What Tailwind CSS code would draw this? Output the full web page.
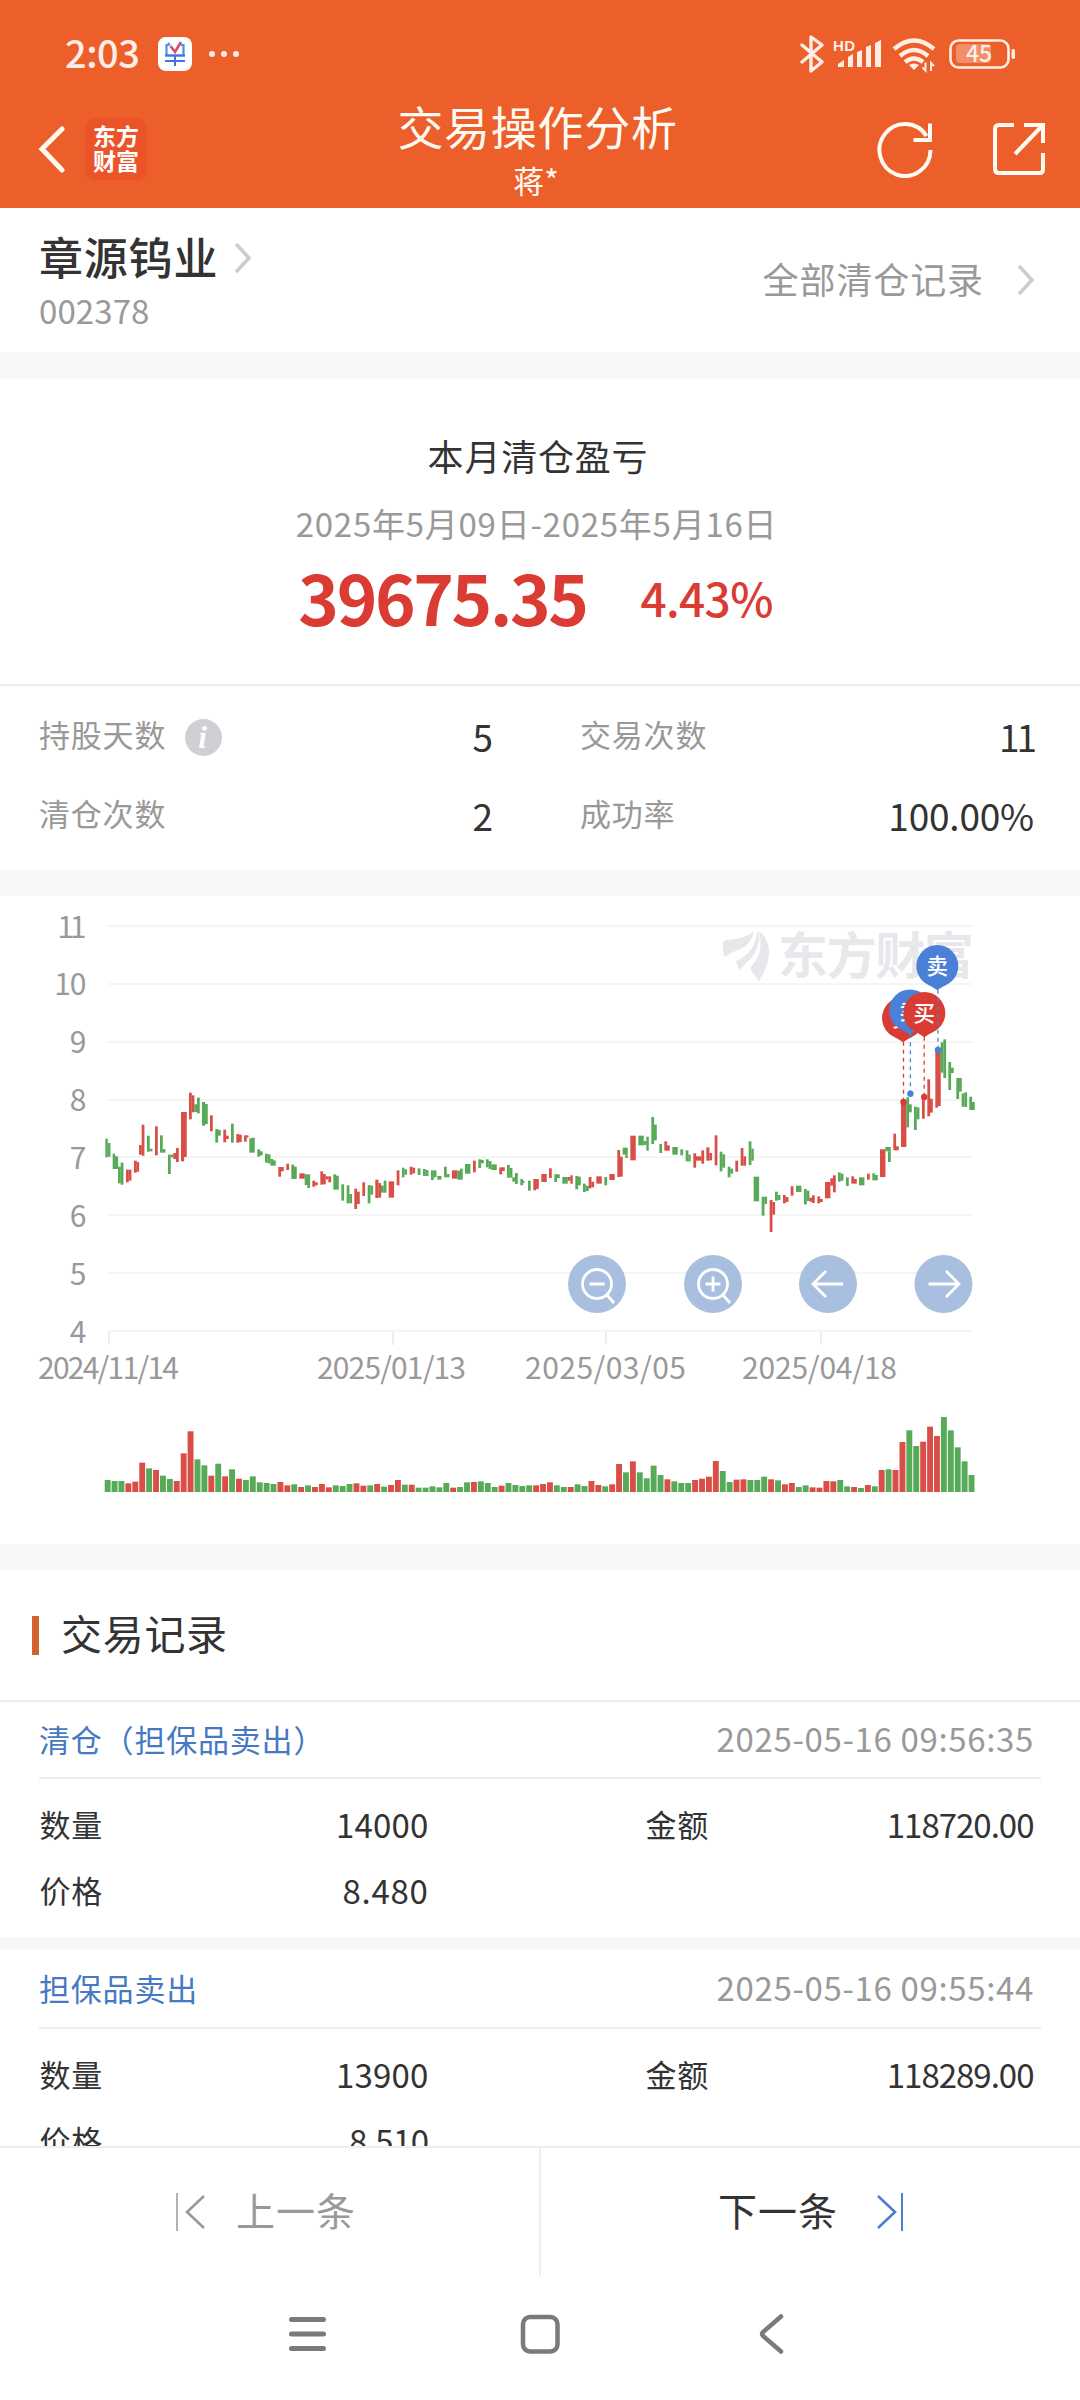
<!DOCTYPE html>
<html lang="zh-CN">
<head>
<meta charset="utf-8">
<title>交易操作分析</title>
<script src="https://cdn.jsdelivr.net/npm/@tailwindcss/browser@4"></script>
</head>
<body class="bg-white">
<div class="flex h-[2400px] w-[1080px] flex-col overflow-hidden bg-white font-['Noto_Sans_CJK_SC',sans-serif] leading-none text-[#333]">

  <!-- Header -->
  <header class="flex h-[208px] shrink-0 flex-col bg-[#ec5f2b] text-white">
    <div class="flex h-[104px] shrink-0 items-center justify-between pr-[64px] pl-[65px] text-[#ffeee6]">
      <div class="flex items-center">
        <span class="w-[93px] text-[38px] font-medium tracking-[-0.5px]">2:03</span>
        <svg class="mt-[4px]" width="34" height="34" viewBox="0 0 34 34" fill="none">
          <rect width="34" height="34" rx="8" fill="#fff"/>
          <path d="M12 8l-2-2M11 8H8.500v10.500h17V8H23" stroke="#4a94e0" stroke-width="2.2"/>
          <path d="M7 24h20M7 18.500h20M17 19v10" stroke="#3f74de" stroke-width="2"/>
          <path d="M12.500 9l4.500 6 6-10" stroke="#d84a70" stroke-width="2.6"/>
        </svg>
        <svg class="mt-[4px] ml-[17px]" width="30" height="6" viewBox="0 0 30 6" fill="currentColor"><circle cx="3" cy="3" r="3"/><circle cx="15" cy="3" r="3"/><circle cx="27" cy="3" r="3"/></svg>
      </div>
      <svg class="mt-[4px]" width="216" height="38" viewBox="800 35 216 38" fill="none" stroke="currentColor">
        <path d="M802 45l20 17-11 9V37l11 8-20 17" stroke-width="3.4" stroke-linejoin="round" stroke-linecap="round"/>
        <text x="833" y="50.500" font-size="15" font-weight="bold" fill="currentColor" stroke="none" font-family="Liberation Sans" textLength="22">HD</text>
        <g fill="currentColor" stroke="none">
          <path d="M838 67v-3l6-4v7zM848 67V57l5-3v13zM857 67V52l5-2v17zM866 67V47l5-2v22zM875 67V43l6-3v27z"/>
          <path d="M914 70l-5-5q5-3 10 0z"/>
        </g>
        <path d="M925.500 62.500v8l-3-3M931 71v-8l3 3" stroke-width="2"/>
        <path d="M894 49q20-17 40 0M900 56q14-12 28 0M905 62q9-7 18 0" stroke-width="4.4"/>
        <rect x="950.5" y="40.500" width="58" height="27" rx="8" stroke-width="2.6"/>
        <rect x="956" y="44" width="35" height="19" rx="4" fill="#f08f68" stroke="none"/>
        <rect x="1011.500" y="49" width="3.500" height="10" rx="1.700" fill="currentColor" stroke="none"/>
        <text x="966" y="62" font-size="23" font-weight="500" fill="currentColor" stroke="none" font-family="Noto Sans CJK SC" textLength="26">45</text>
      </svg>
    </div>
    <div class="flex h-[104px] items-start justify-between pr-[34px] pl-[38px]">
      <div class="flex w-[170px] items-center pt-[14px]">
        <svg width="28" height="48" viewBox="0 0 28 48" fill="none" stroke="#fff8ef" stroke-width="5" stroke-linecap="round"><path d="M24 4L4 24l20 21"/></svg>
        <div class="ml-[19px] flex h-[62px] w-[62px] flex-col items-center justify-center rounded-[11px] bg-[#eb5428] pb-[2px] text-[23px] leading-[25.500px] font-bold">
          <span>东方</span><span>财富</span>
        </div>
      </div>
      <div class="mt-[-2px] mr-[9px] flex flex-col items-center text-[#fffaf2]">
        <h1 class="text-[46px] leading-[46px] tracking-[0.700px]">交易操作分析</h1>
        <p class="mt-[16px] mr-[3px] text-[31px] leading-[31px]">蒋*</p>
      </div>
      <div class="flex w-[170px] justify-between pt-[16px]">
        <svg width="58" height="58" viewBox="876 120 58 58" fill="none" stroke="#fffaf2" stroke-width="4"><path d="M930.500 150a25.500 26 0 1 1-4-14M930 123.500v16.500h-16.500"/></svg>
        <svg width="56" height="56" viewBox="990 121 56 56" fill="none" stroke="#fffaf2" stroke-width="4"><path d="M1014 126h-15q-4 0-4 4v40q0 4 4 4h41q3 0 3-4v-16M1024 126h19v18M1042 127l-27 28"/></svg>
      </div>
    </div>
  </header>

  <!-- Stock -->
  <section class="flex h-[144px] shrink-0 justify-between pr-[45px] pl-[39px]">
    <div class="pt-[26px]">
      <div class="flex items-center">
        <h2 class="text-[44px] leading-[44px] font-medium tracking-[0.800px]">章源钨业</h2>
        <svg class="mt-[3px] ml-[16px]" width="18" height="32" viewBox="0 0 18 32" fill="none" stroke="#ccc" stroke-width="3.500"><path d="M2 2l13 14L2 30"/></svg>
      </div>
      <p class="mt-[16px] text-[33px] leading-[33px] tracking-[0.100px] text-[#999]">002378</p>
    </div>
    <div class="flex h-[140px] items-center text-[36px] tracking-[0.900px] text-[#999]">
      <span>全部清仓记录</span>
      <svg class="mt-[4px] ml-[33px]" width="18" height="32" viewBox="0 0 18 32" fill="none" stroke="#ccc" stroke-width="3.500"><path d="M2 2l13 14L2 30"/></svg>
    </div>
  </section>
  <div class="h-[27px] shrink-0 bg-[#f8f8f8]"></div>

  <!-- Profit -->
  <section class="flex h-[307px] shrink-0 flex-col items-center border-b-2 border-[#eee] pt-[58px]">
    <h3 class="ml-[-4px] text-[36px] leading-[36px] tracking-[0.800px]">本月清仓盈亏</h3>
    <p class="mt-[34px] ml-[-7px] text-[33px] leading-[33px] tracking-[0.750px] text-[#999]">2025年5月09日-2025年5月16日</p>
    <div class="mt-[20px] ml-[-9px] flex items-center gap-[54px] font-bold text-[#da3b32]">
      <span class="text-[69px] leading-[70px] tracking-[-2.400px]">39675.35</span>
      <span class="pt-[2px] text-[46px] leading-[70px] font-medium tracking-[-0.700px]">4.43%</span>
    </div>
  </section>

  <!-- Statistics -->
  <section class="grid h-[184px] shrink-0 grid-cols-2 content-start gap-x-[87px] pt-[10px] pr-[46px] pl-[39px] text-[31px] tracking-[0.800px] text-[#999]">
    <div class="flex h-[78px] items-center justify-between">
      <span class="flex items-center pb-[4px]">持股天数
        <svg class="mt-[8px] ml-[19px]" width="37" height="37" viewBox="0 0 37 37"><circle cx="18.500" cy="18.500" r="18.500" fill="#cfd0d6"/><text x="18" y="28.500" text-anchor="middle" fill="#fff" font-family="Liberation Serif" font-style="italic" font-weight="bold" font-size="31">i</text></svg>
      </span>
      <span class="pt-[3px] text-[37px] tracking-normal text-[#333]">5</span>
    </div>
    <div class="flex h-[78px] items-center justify-between"><span class="pb-[4px]">交易次数</span><span class="pt-[3px] text-[37px] tracking-[-3px] text-[#333]">11</span></div>
    <div class="flex h-[78px] items-center justify-between"><span class="pb-[2px]">清仓次数</span><span class="pt-[4px] text-[37px] tracking-normal text-[#333]">2</span></div>
    <div class="flex h-[78px] items-center justify-between"><span class="pb-[2px]">成功率</span><span class="pt-[4px] text-[37px] tracking-[-0.200px] text-[#333]">100.00%</span></div>
  </section>
  <div class="h-[26px] shrink-0 bg-[#f8f8f8]"></div>

  <!-- Chart -->
  <section class="h-[648px] shrink-0">
    <svg id="chart" width="1080" height="648" viewBox="0 896 1080 648" font-family="Noto Sans CJK SC, sans-serif">
      <g id="grid" stroke="#f5f5f5" stroke-width="2"></g>
      <g id="ticks" stroke="#eee" stroke-width="2"></g>
      <g id="labels" fill="#999" font-size="30"></g>
      <g fill="#e7e7ec">
        <path d="M723 944q0-4 4-4 18-1 27-9-3 14-14 18-8 3-16 8-1-6-1-13z"/>
        <path d="M736 961q20-9 21-30 3 4 2 10-3 14-13 22-4 4-6 8z"/>
        <path d="M759 931q8 6 10 18 1 15-10 32l-8-11q-1-4 3-7 10-12 5-32z"/>
        <text x="778" y="974" font-size="50" font-weight="bold" textLength="196">东方财富</text>
      </g>
      <g id="candles"></g>
      <g id="volume"></g>
      <g id="pins"></g>
      <g fill="#a9bfe0">
        <circle cx="597" cy="1284" r="29"/><circle cx="713" cy="1284" r="29"/><circle cx="828" cy="1284" r="29"/><circle cx="943.500" cy="1284" r="29"/>
      </g>
      <g fill="none" stroke="#fff" stroke-width="2.800">
        <circle cx="597" cy="1284" r="14.500"/><path d="M589.500 1284h15M607 1295l7 8"/>
        <circle cx="713" cy="1284" r="14.500"/><path d="M705.500 1284h15M713 1276.500v15M723 1295l7 8"/>
        <path d="M843 1284h-29M826 1271l-13 13 13 13"/>
        <path d="M928.500 1284h30M946 1271l13 13-13 13"/>
      </g>
    </svg>
  </section>
  <div class="h-[26px] shrink-0 bg-[#f8f8f8]"></div>

  <!-- Trade records -->
  <section class="h-[576px] shrink-0 overflow-hidden">
    <div class="flex h-[132px] items-center border-b-2 border-[#eee] pl-[32px]">
      <i class="h-[39px] w-[7px] bg-[#d2622f]"></i>
      <h3 class="ml-[22px] pb-[5px] text-[41px] tracking-[0.700px]">交易记录</h3>
    </div>
    <article class="h-[235px] pr-[39px] pl-[39px]">
      <div class="flex h-[77px] items-center justify-between border-b-2 border-[#eee] pr-[7px] pb-[3px]">
        <span class="text-[31px] tracking-[0.800px] text-[#4678c4]">清仓（担保品卖出）</span>
        <time class="text-[33px] tracking-[0.650px] text-[#999]">2025-05-16 09:56:35</time>
      </div>
      <div class="grid h-[158px] grid-cols-[389px_217px_388px] content-start pt-[12px] pl-[0.500px] text-[33px] leading-[66px]">
        <div class="flex justify-between"><span class="text-[31px] tracking-[0.800px]">数量</span><span class="tracking-[0.200px]">14000</span></div>
        <span></span>
        <div class="flex justify-between"><span class="text-[31px] tracking-[0.800px]">金额</span><span class="tracking-[-1px]">118720.00</span></div>
        <div class="flex justify-between"><span class="text-[31px] tracking-[0.800px]">价格</span><span class="tracking-[0.700px]">8.480</span></div>
      </div>
    </article>
    <div class="h-[13px] bg-[#f8f8f8]"></div>
    <article class="h-[235px] pr-[39px] pl-[39px]">
      <div class="flex h-[79px] items-center justify-between border-b-2 border-[#eee] pr-[7px] pb-[3px]">
        <span class="text-[31px] tracking-[0.800px] text-[#4678c4]">担保品卖出</span>
        <time class="text-[33px] tracking-[0.650px] text-[#999]">2025-05-16 09:55:44</time>
      </div>
      <div class="grid grid-cols-[389px_217px_388px] content-start pt-[12px] pl-[0.500px] text-[33px] leading-[66px]">
        <div class="flex justify-between"><span class="text-[31px] tracking-[0.800px]">数量</span><span class="tracking-[0.200px]">13900</span></div>
        <span></span>
        <div class="flex justify-between"><span class="text-[31px] tracking-[0.800px]">金额</span><span class="tracking-[-1px]">118289.00</span></div>
        <div class="flex justify-between"><span class="text-[31px] tracking-[0.800px]">价格</span><span class="tracking-[-0.600px]">8.510</span></div>
      </div>
    </article>
  </section>

  <!-- Pager -->
  <nav class="flex h-[130px] shrink-0 border-t-2 border-[#eee] text-[39px] tracking-[1px]">
    <div class="flex w-[541px] items-center border-r-2 border-[#eee] pl-[176px] text-[#999]">
      <svg width="32" height="38" viewBox="0 0 32 38" fill="none" stroke="currentColor"><path d="M1 0v38" stroke-width="1.500"/><path d="M28 3L11 19l17 16" stroke-width="2.600"/></svg>
      <span class="ml-[28px] pb-[6px]">上一条</span>
    </div>
    <div class="flex items-center pl-[177px]">
      <span class="pb-[6px]">下一条</span>
      <svg class="ml-[37px]" width="32" height="38" viewBox="0 0 32 38" fill="none" stroke="#4a80d0"><path d="M27 0v38" stroke-width="2"/><path d="M3 3l17 16L3 35" stroke-width="2.600"/></svg>
    </div>
  </nav>

  <!-- System navigation -->
  <nav class="flex h-[124px] shrink-0 items-start pt-[34px] pl-[289px]">
    <svg width="37" height="46" viewBox="0 0 37 46" fill="none" stroke="#7a7a7a" stroke-width="5" stroke-linecap="round"><path d="M2.500 9.500h32M2.500 24h32M2.500 38.500h32"/></svg>
    <svg class="ml-[194px]" width="40" height="46" viewBox="0 0 40 46" fill="none" stroke="#7a7a7a" stroke-width="4.500"><rect x="3" y="7" width="34.500" height="34.500" rx="7"/></svg>
    <svg class="ml-[198px]" width="28" height="46" viewBox="0 0 28 46" fill="none" stroke="#7a7a7a" stroke-width="4.500" stroke-linecap="round" stroke-linejoin="round"><path d="M23 6.500L5 22q-2 2 0 4l18 15.500"/></svg>
  </nav>
</div>

<script>
const NS = 'http://www.w3.org/2000/svg';
const RED = '#d94f48', GREEN = '#57aa57';
function add(parent, tag, attrs, text) {
  const el = document.createElementNS(NS, tag);
  for (const k in attrs) el.setAttribute(k, attrs[k]);
  if (text) el.textContent = text;
  document.getElementById(parent).appendChild(el);
}
for (let i = 0; i < 8; i++) {
  const y = 926 + i * 57.86;
  add('grid', 'line', {x1: 108, x2: 972, y1: Math.round(y), y2: Math.round(y)});
  const narrow = i === 0 ? -4 : i === 1 ? -1 : 0;
  add('labels', 'text', {x: 86.5 + narrow, y: y + 11.5, 'text-anchor': 'end', 'letter-spacing': narrow}, String(11 - i));
}
[[109, 39, 139, '2024/11/14'], [393, 318, 147, '2025/01/13'], [606, 526, 159, '2025/03/05'], [821, 743, 153, '2025/04/18']].forEach(([t, x, w, s]) => {
  add('ticks', 'line', {x1: t, x2: t, y1: 1332, y2: 1345});
  add('labels', 'text', {x: x - 1, y: 1379, textLength: w + 2}, s);
});

// Candle pieces: colour, x0-x1, y0-y1 in thirds of a pixel from each group's origin
const groups = [
[80, 1060, `g 76-83 236-292;g 83-91 249-290;g 98-105 281-327;g 105-114 289-327;g 114-122 320-370;g 122-130 308-374;r 138-146 329-367;r 146-154 329-362;r 162-170 302-338;r 170-177 306-335;r 177-185 255-284;r 185-193 194-287;g 201-209 227-275;g 209-217 266-274;r 225-233 199-286;g 240-248 226-278;g 248-256 267-278;g 264-272 284-342;g 272-280 284-292;r 280-288 279-297;r 288-296 264-306;r 303-312 156-304;r 312-320 156-291;r 327-335 98-178;r 335-343 106-157;g 343-351 133-156;g 351-359 113-160;g 366-375 126-197;g 375-383 132-192;r 390-398 166-214;g 406-414 207-248;g 414-422 210-227;r 430-438 209-247;r 438-446 227-237;g 453-461 191-248;r 469-477 222-248;r 477-485 224-246;r 492-500 226-245;r 500-505 226-233;g 508-516 235-278;g 516-524 233-278;g 532-540 268-290;g 540-548 274-286;g 555-563 281-308;g 563-571 283-310;g 571-579 297-317;g 579-587 301-317;r 595-603 321-350;r 603-611 321-334;r 619-627 311-330;g 634-642 314-357;g 642-650 320-357;r 658-674 340-356;g 674-690 343-375;g 682-690 375-384;r 697-705 362-380;r 705-713 367-376;r 721-729 334-374;r 729-737 342-373;r 737-745 349-358;r 745-753 349-367;g 760-768 343-389;g 768-776 347-389;g 784-792 373-422;g 800-808 376-430;g 808-816 402-430;r 823-831 386-447;r 831-839 395-432;r 847-855 367-408;g 863-871 375-430;g 871-879 377-404`],
[340, 1080, `r 106-115 299-354;r 115-123 309-353;g 123-131 317-338;g 131-139 302-338;r 146-162 304-353;r 170-178 271-316;g 186-193 263-292;g 193-201 268-284;r 209-217 260-284;r 217-225 263-280;g 233-241 265-285;g 249-257 267-288;g 257-265 270-288;g 273-281 271-300;g 281-289 271-292;g 292-304 288-299;g 312-320 260-292;g 320-328 282-292;r 336-352 271-296;g 352-360 272-299;g 360-368 266-299;g 375-391 252-281;r 399-407 242-277;g 415-423 238-264;g 423-431 240-250;g 438-446 238-262;g 446-454 243-267;g 454-470 253-270;r 478-486 262-283;r 486-494 262-273;g 501-509 255-293;g 509-517 264-293;g 517-525 292-305;g 525-533 279-312;g 541-549 297-316;g 549-553 303-309;g 564-572 302-332;r 580-588 297-331;r 588-596 297-327;r 604-620 282-306;r 627-635 265-294;g 643-651 283-306;g 651-659 283-294;g 667-683 291-311;r 683-691 291-302;r 691-698 286-311;g 706-714 288-328;g 714-722 290-316;g 729-737 311-336;g 737-746 317-333;r 746-754 291-325;r 754-762 305-322;r 769-785 289-311;g 793-801 291-316;r 808-824 282-300;r 832-840 210-291;r 840-848 230-290;g 848-863 203-224;g 856-863 224-234;r 871-887 167-241`],
[600, 1060, `g 115-131 227-256;g 131-139 243-255;g 139-146 230-272;g 154-162 171-252;g 162-170 194-241;g 178-186 252-279;r 193-201 244-272;r 201-209 256-272;g 217-233 261-284;g 241-249 268-286;g 257-265 271-304;g 265-272 284-304;r 280-288 280-323;r 288-304 289-302;r 304-312 271-311;r 319-328 262-302;r 328-336 279-301;r 344-352 226-316;g 359-367 275-334;g 367-375 283-323;g 383-391 320-352;g 391-399 326-341;r 406-414 302-335;r 422-430 264-317;r 430-438 289-317;g 446-454 244-315;g 454-461 266-302;g 461-477 350-424;g 485-493 410-467;g 493-501 410-432;r 509-517 420-516;r 517-525 426-464;g 525-533 395-422;g 533-541 405-420;r 549-557 405-430;r 557-565 411-426;r 572-580 379-407;g 588-604 377-396;g 612-620 387-433;g 620-628 392-423;r 628-636 413-425;r 636-644 406-429;r 652-660 409-430;r 660-668 417-426;r 675-691 366-415;r 691-699 355-377;r 699-707 346-397;g 714-722 337-365;g 722-730 341-362;g 738-746 352-378;r 754-762 349-371;r 762-770 357-371;g 777-793 352-376;r 801-809 341-359;g 817-825 340-361;g 825-833 345-361;r 840-856 268-351;g 856-872 261-274;g 864-872 274-306`],
[700, 900, `r 580-588 701-751;r 588-596 739-751;r 603-619 605-741;g 619-627 592-682;g 627-635 613-637;g 642-650 620-690;g 650-658 622-658;r 666-674 590-656;r 682-690 538-649;r 690-698 596-638;r 706-722 450-618;r 706-714 618-623;g 722-730 427-518;g 730-738 418-534;g 745-753 486-570;g 753-761 503-519;g 769-777 534-597;g 777-785 534-575;g 785-793 580-620;g 793-801 577-621;g 808-816 590-630;g 816-824 606-630`]
];
for (const [ox, oy, s] of groups) for (const p of s.split(';')) {
  const [c, xs, ys] = p.trim().split(' ');
  const [x0, x1] = xs.split('-').map(Number), [y0, y1] = ys.split('-').map(Number);
  add('candles', 'rect', {x: (ox + x0 / 3).toFixed(2), y: (oy + y0 / 3).toFixed(2), width: ((x1 - x0) / 3 + 0.1).toFixed(2), height: ((y1 - y0) / 3).toFixed(2), fill: c === 'r' ? RED : GREEN});
}

// Daily volume: colour and bar height in thirds of a pixel
const vol = 'g36 g33 g33 r26 r31 r88 g71 r66 g49 g39 r33 r116 r182 g98 g80 r49 g85 r47 g68 r40 g36 g47 g29 g27 g24 r30 r20 g23 r15 g20 r15 r24 r14 g20 g18 g24 r26 r19 g20 r24 g16 r21 r36 g22 r22 g13 g13 g17 g14 g27 r13 g15 g29 r30 g32 g27 g15 r19 g27 g21 g18 g20 r20 r24 r29 g20 g15 r15 g23 g18 r33 r21 g17 r23 r84 g59 r92 g59 g41 g79 g51 r38 g32 g27 g27 r36 r40 r46 r93 g63 g30 r37 r38 g36 g36 g46 r38 g35 r23 r27 g15 g20 r14 r13 r33 r32 g36 g17 r15 g12 r21 g17 r66 g68 r66 r150 g185 g138 r151 r196 r168 g225 g185 g134 g92 g51'.split(' ');
vol.forEach((v, i) => {
  const h = v.slice(1) / 3;
  add('volume', 'rect', {x: (104.7 + i * 6.911).toFixed(2), y: (1492 - h).toFixed(2), width: 5.9, height: h.toFixed(2), fill: v[0] === 'r' ? RED : GREEN});
});

// Buy and sell pins
function pin(cx, cy, tx, dotY, color, label) {
  const tip = cy + 23.8;
  add('pins', 'line', {x1: tx, x2: tx, y1: tip, y2: dotY, stroke: color, 'stroke-width': 1.3, 'stroke-dasharray': '4 4'});
  add('pins', 'circle', {cx: tx, cy: dotY, r: 3.2, fill: color});
  add('pins', 'circle', {cx, cy, r: 21, fill: color});
  add('pins', 'path', {d: `M${cx - 15} ${cy + 14.5}L${cx} ${tip + 0.5}L${cx + 15} ${cy + 14.5}z`, fill: color});
  add('pins', 'text', {x: cx, y: cy + 8, 'text-anchor': 'middle', 'font-size': 21.5, 'font-weight': 500, fill: '#fff'}, label);
}
pin(903, 1018, 903.5, 1102, '#da3b32', '买');
pin(910, 1010.5, 910.4, 1093.7, '#4a80d8', '卖');
pin(924.3, 1013, 924.2, 1097, '#da3b32', '买');
pin(937.3, 966, 938, 1050, '#4a80d8', '卖');
</script>
</body>
</html>
